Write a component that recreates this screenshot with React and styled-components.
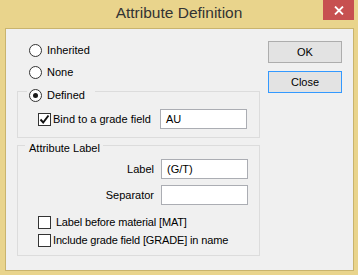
import React from 'react'
import styled, { createGlobalStyle } from 'styled-components';

const GlobalStyle = createGlobalStyle`
  html, body { margin: 0; padding: 0; }
  body { font-family: "Liberation Sans", Arial, sans-serif; }
`;

const Window = styled.div`
  width: 358px;
  height: 275px;
  background: #e9d48c;
  display: flex;
  flex-direction: column;
  box-sizing: border-box;
`;

const TitleBar = styled.div`
  height: 28px;
  display: grid;
  grid-template-columns: 1fr auto 1fr;
`;

const Title = styled.div`
  grid-column: 2;
  padding-top: 4px;
  font-size: 15.5px;
  line-height: 18px;
  color: #333;
  white-space: nowrap;
`;

const CloseX = styled.div`
  grid-column: 3;
  justify-self: end;
  width: 31px;
  height: 20px;
  margin-right: 4px;
  background: #c75050;
  display: flex;
  align-items: center;
  justify-content: center;
`;

const Client = styled.div`
  height: 243px;
  margin: 0 4px 4px 5px;
  border: 1px solid #c9b46e;
  background: #f0f0f0;
  box-sizing: border-box;
  display: flex;
  font-size: 11px;
  line-height: 13px;
  color: #000;
`;

const LeftPane = styled.div`
  padding: 15px 0 0 11px;
  width: 243px;
  display: flex;
  flex-direction: column;
`;

const RadioList = styled.div`
  display: flex;
  flex-direction: column;
  gap: 9px;
  margin-left: 12px;
`;

const Row = styled.div`
  display: flex;
  align-items: center;
  height: 13px;
  gap: ${({ gap }) => gap ?? 5}px;
  white-space: nowrap;
  letter-spacing: ${({ tight }) => (tight ? '-0.15px' : 'normal')};
`;

const RadioCircle = styled.span`
  width: 13px;
  height: 13px;
  box-sizing: border-box;
  border: 1px solid #333;
  border-radius: 50%;
  background: #fff;
  display: flex;
  align-items: center;
  justify-content: center;
  flex: none;
  &::after {
    content: '';
    width: 5px;
    height: 5px;
    border-radius: 50%;
    background: ${({ checked }) => (checked ? '#1a1a1a' : 'transparent')};
  }
`;

const CheckBox = styled.span`
  width: 13px;
  height: 13px;
  box-sizing: border-box;
  border: 1px solid #333;
  background: #fff;
  display: flex;
  align-items: center;
  justify-content: center;
  flex: none;
`;

const Group = styled.div`
  margin-top: ${({ top }) => top}px;
  border: 1px solid #dcdcdc;
  padding: 0 0 8px 0;
  display: flex;
  flex-direction: column;
`;

const Legend = styled.div`
  margin: ${({ top }) => top}px 0 0 ${({ left }) => left}px;
  padding: ${({ pad }) => pad};
  background: #f0f0f0;
  align-self: flex-start;
  height: 13px;
  display: flex;
  align-items: center;
  white-space: nowrap;
`;

const BindRow = styled.div`
  margin: 7px 0 0 20px;
  display: grid;
  grid-template-columns: 122px 87px;
  align-items: center;
`;

const TextInput = styled.div`
  width: 87px;
  height: 20px;
  box-sizing: border-box;
  border: 1px solid #abadb3;
  background: #fff;
  padding-left: 5px;
  display: flex;
  align-items: center;
`;

const FieldGrid = styled.div`
  margin-top: 4px;
  display: grid;
  grid-template-columns: 136px 87px;
  column-gap: 7px;
  row-gap: 6px;
  align-items: center;
`;

const FieldLabel = styled.div`
  text-align: right;
`;

const CheckList = styled.div`
  margin: 11px 0 0 20px;
  display: flex;
  flex-direction: column;
  gap: 5px;
`;

const RightPane = styled.div`
  margin-left: 8px;
  padding-top: 12px;
  display: flex;
  flex-direction: column;
  gap: 8px;
`;

const Button = styled.div`
  width: 74px;
  height: 22px;
  box-sizing: border-box;
  border: 1px solid ${({ active }) => (active ? '#3399ff' : '#adadad')};
  background: #e3e3e3;
  display: flex;
  align-items: center;
  justify-content: center;
  font-size: 11px;
`;

const Check = () => (
  <svg width="11" height="11" viewBox="0 0 11 11">
    <path d="M1.5 5.5 L4.2 8.5 L9.5 1.5" fill="none" stroke="#111" strokeWidth="1.9" />
  </svg>
);

const App = () => {
  return (
    <>
      <GlobalStyle />
      <Window>
        <TitleBar>
          <Title>Attribute Definition</Title>
          <CloseX>
            <svg width="10" height="9" viewBox="0 0 10 9">
              <path d="M1 0.5 L9 8.5 M9 0.5 L1 8.5" stroke="#fff" strokeWidth="1.8" />
            </svg>
          </CloseX>
        </TitleBar>
        <Client>
          <LeftPane>
            <RadioList>
              <Row><RadioCircle />Inherited</Row>
              <Row><RadioCircle />None</Row>
            </RadioList>
            <Group top={12}>
              <Legend top={-3} left={9} pad="0 10px 0 2px">
                <Row><RadioCircle checked />Defined</Row>
              </Legend>
              <BindRow>
                <Row gap={2}><CheckBox><Check /></CheckBox>Bind to a grade field</Row>
                <TextInput>AU</TextInput>
              </BindRow>
            </Group>
            <Group top={7}>
              <Legend top={-4} left={7} pad="0 3px 0 4px">Attribute Label</Legend>
              <FieldGrid>
                <FieldLabel>Label</FieldLabel>
                <TextInput>(G/T)</TextInput>
                <FieldLabel>Separator</FieldLabel>
                <TextInput />
              </FieldGrid>
              <CheckList>
                <Row gap={2} tight>
                  <CheckBox />{'\u00a0'}Label before material [MAT]
                </Row>
                <Row gap={2} tight>
                  <CheckBox />Include grade field [GRADE] in name
                </Row>
              </CheckList>
            </Group>
          </LeftPane>
          <RightPane>
            <Button>OK</Button>
            <Button active>Close</Button>
          </RightPane>
        </Client>
      </Window>
    </>
  )
}

export default App
